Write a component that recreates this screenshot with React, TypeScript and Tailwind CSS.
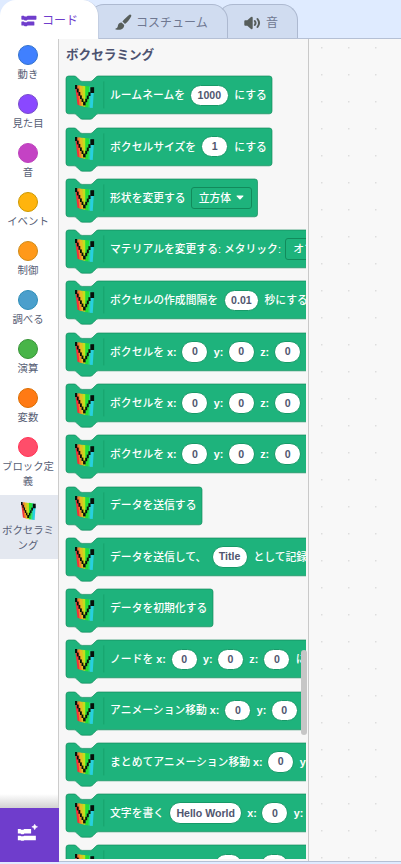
import React from "react";

type Piece = { kind: "text" | "input" | "menu"; value: string; w: string };
type BlockData = { width: number; pieces: Piece[] };

const t = (value: string, w: string): Piece => ({ kind: "text", value, w });
const i = (value: string, w: string): Piece => ({ kind: "input", value, w });
const m = (value: string, w: string): Piece => ({ kind: "menu", value, w });

const xyz: Piece[] = [
  t("ボクセルを x:", "w-[71.3px]"), i("0", "w-[27px]"),
  t("y:", "w-[19.4px] pl-[5.4px]"), i("0", "w-[27px]"),
  t("z:", "w-[19.4px] pl-[5.4px]"), i("0", "w-[27px]"),
];

const blocks: BlockData[] = [
  { width: 206, pieces: [t("ルームネームを", "w-[80px]"), i("1000", "w-[38.5px]"), t("にする", "pl-[5.7px]")] },
  { width: 206, pieces: [t("ボクセルサイズを", "w-[91px]"), i("1", "w-[27px]"), t("にする", "pl-[6.2px]")] },
  { width: 191.5, pieces: [t("形状を変更する", "w-[80.6px]"), m("立方体", "w-[61.5px]")] },
  { width: 300, pieces: [t("マテリアルを変更する: メタリック:", "w-[175.2px]"), m("オフ", "w-[51px]")] },
  { width: 300, pieces: [t("ボクセルの作成間隔を", "w-[113.6px]"), i("0.01", "w-[35.5px]"), t("秒にする", "pl-[5.4px]")] },
  { width: 350, pieces: xyz },
  { width: 350, pieces: xyz },
  { width: 350, pieces: xyz },
  { width: 136, pieces: [t("データを送信する", "")] },
  { width: 350, pieces: [t("データを送信して、", "w-[101.5px]"), i("Title", "w-[36px]"), t("として記録", "pl-[5.9px]")] },
  { width: 147, pieces: [t("データを初期化する", "")] },
  { width: 350, pieces: [t("ノードを x:", "w-[60.5px]"), i("0", "w-[27px]"), t("y:", "w-[19.4px] pl-[5.4px]"), i("0", "w-[27px]"), t("z:", "w-[19.4px] pl-[5.4px]"), i("0", "w-[27px]"), t("に", "pl-[5.4px]")] },
  { width: 350, pieces: [t("アニメーション移動 x:", "w-[114.3px]"), i("0", "w-[27px]"), t("y:", "w-[19.4px] pl-[5.4px]"), i("0", "w-[27px]")] },
  { width: 350, pieces: [t("まとめてアニメーション移動 x:", "w-[157.2px]"), i("0", "w-[27px]"), t("y:", "w-[19.4px] pl-[5.4px]")] },
  { width: 350, pieces: [t("文字を書く", "w-[59.4px]"), i("Hello World", "w-[72.5px]"), t("x:", "w-[19.4px] pl-[5.4px]"), i("0", "w-[27px]"), t("y:", "w-[19.4px] pl-[5.4px]")] },
  { width: 350, pieces: [t("", "w-[104.6px]"), i("", "w-[27px]"), t("", "w-[19.4px]"), i("", "w-[27px]")] },
];

const categories = [
  { name: "動き", color: "bg-[#4080ff] border-[#3373cc]" },
  { name: "見た目", color: "bg-[#8a48ff] border-[#774dcb]" },
  { name: "音", color: "bg-[#c442c4] border-[#bd42bd]" },
  { name: "イベント", color: "bg-[#ffb40d] border-[#cc9900]" },
  { name: "制御", color: "bg-[#ff991a] border-[#cf8b17]" },
  { name: "調べる", color: "bg-[#4a9fcc] border-[#2e8eb8]" },
  { name: "演算", color: "bg-[#48b548] border-[#389438]" },
  { name: "変数", color: "bg-[#ff7a14] border-[#db6e00]" },
  { name: "ブロック定義", color: "bg-[#ff4d6a] border-[#ff3355]" },
];

function VoxelIcon({ className }: { className: string }) {
  return (
    <svg className={className} viewBox="0 0 20 23" preserveAspectRatio="none">
      <path d="M.4 3 4 1 6 20.8 2.6 19.8Z" fill="#f5303a" />
      <path d="M2.4 .3 5.4 .6 7.5 21.2 4.6 20.5Z" fill="#f0802c" />
      <path d="M4.6 .5 8 .9 9.5 21.6 6.8 21Z" fill="#e3bd22" />
      <path d="M7.6 .8 11 1.2 11 22 8.8 21.6Z" fill="#c3df1c" />
      <path d="M10.6 1.1 15 1.6 14.2 22.4 10.6 21.9Z" fill="#25df36" />
      <path d="M14.6 1.5 17 1.7 16.4 22.7 13.8 22.4Z" fill="#2bd98c" />
      <path d="M16 5 19.4 5 18.2 23 15.4 22.7Z" fill="#28cfe0" />
      <g fill="#07100a">
        <rect x="0" y="0" width="2.2" height="4" />
        <rect x="1.9" y="3.6" width="1.9" height="3.8" />
        <rect x="3.5" y="7" width="1.9" height="3.8" />
        <rect x="5.1" y="10.4" width="1.9" height="3.6" />
        <rect x="6.7" y="13.6" width="1.9" height="3.4" />
        <rect x="8.3" y="16.6" width="2.6" height="3.8" />
        <rect x="10.5" y="13.8" width="2" height="3.4" />
        <rect x="12.1" y="10.6" width="2" height="3.6" />
        <rect x="13.7" y="7.2" width="2.2" height="3.8" />
        <rect x="15.7" y="2.2" width="3.9" height="5.8" />
      </g>
    </svg>
  );
}

function CodeIcon({ className }: { className: string }) {
  return (
    <svg className={className} viewBox="0 0 17 12" fill="currentColor">
      <path d="M1 .3h2l.9.8h2.2l.9-.8h8.8q.6 0 .6.6V4q0 .6-.6.6H7l-.9.9H3.9L3 4.6H1Q.4 4.6.4 4V.9Q.4.3 1 .3Z" />
      <path d="M1 6.6h2l.9.8h2.2l.9-.8h6.6q.6 0 .6.6v3q0 .6-.6.6H7l-.9.8H3.9l-.9-.8H1q-.6 0-.6-.6v-3q0-.6.6-.6Z" />
    </svg>
  );
}

function BlockShape({ width }: { width: number }) {
  const w = width / 0.675;
  const d = `M0 4A4 4 0 0 1 4 0H12c2 0 3 1 4 2l4 4c1 1 2 2 4 2h12c2 0 3-1 4-2l4-4c1-1 2-2 4-2H${w - 4}a4 4 0 0 1 4 4V52a4 4 0 0 1-4 4H48c-2 0-3 1-4 2l-4 4c-1 1-2 2-4 2H24c-2 0-3-1-4-2l-4-4c-1-1-2-2-4-2H4a4 4 0 0 1-4-4Z`;
  return (
    <svg className="absolute left-0 top-0 overflow-visible" width={width} height={43.2}>
      <g transform="scale(.675)">
        <path d={d} fill="#1eb37c" stroke="#128a5b" strokeWidth="1" />
        <path d="M56 8V48" stroke="#159965" strokeWidth="1" />
      </g>
    </svg>
  );
}

function Block({ width, pieces }: BlockData) {
  return (
    <div className="relative h-[51.28px] shrink-0">
      <BlockShape width={width} />
      <div className="relative flex h-[38px] items-center whitespace-nowrap pl-[9.4px] text-[10.8px] font-medium text-white">
        <VoxelIcon className="mt-[3px] h-[23px] w-[19.5px] shrink-0" />
        <div className="flex items-center pl-[15.2px]">
          {pieces.map((p, k) => {
            if (p.kind === "text")
              return (
                <span key={k} className={`shrink-0 ${p.w}`}>
                  {p.value.split(/([xyz]:)/).map((s, n) => (n % 2 ? <b key={n} className="font-bold">{s}</b> : s))}
                </span>
              );
            if (p.kind === "input")
              return (
                <span key={k} className={`flex h-[21.6px] shrink-0 items-center justify-center rounded-full border-[0.7px] border-[#179a68] bg-white pt-px text-[10.6px] font-bold text-[#50566f] ${p.w}`}>
                  {p.value}
                </span>
              );
            return (
              <span key={k} className={`flex h-[22.5px] shrink-0 items-center gap-[5px] rounded-[3px] border border-[#128a5b] pl-[7px] ${p.w}`}>
                {p.value}
                <svg className="h-[5px] w-[8px]" viewBox="0 0 8 5"><path d="M1 .5h6q.8 0 .3.7L4.6 4.3q-.6.6-1.2 0L.7 1.2Q.2.5 1 .5Z" fill="white" /></svg>
              </span>
            );
          })}
        </div>
      </div>
    </div>
  );
}

function Tabs() {
  return (
    <div className="flex h-[39px] shrink-0 items-end border-b border-[#b5c0d5] bg-[#dfebff] text-[12px] text-[#6f7891]">
      <div className="relative z-20 -mb-px flex h-[39px] w-[99px] items-center rounded-t-[16px] border-r border-[#c3cee2] bg-white pl-[21px] pt-[2px] text-[#6f3dcc]">
        <CodeIcon className="h-[12px] w-[16px]" />
        <span className="ml-[5px]">コード</span>
      </div>
      <div className="relative z-10 -ml-[11px] flex h-[34px] w-[140px] items-center rounded-t-[16px] border border-b-0 border-[#adb9d0] bg-[#d0dcf0] pl-[26px] pt-[2px]">
        <svg className="h-[17px] w-[17px]" viewBox="0 0 17 17" fill="#575e5b">
          <path d="M15.7.8c.8.4.7 1.2.3 2-1.4 2.7-3.6 5.5-6 7.3L7.4 7.6C9.5 5 12.6 2 14.4.8q.7-.4 1.3 0Z" />
          <path d="M6.5 8.5 9.2 11c0 3.8-3.3 5.7-8.4 4.4-.6-.2-.7-.7 0-.9 2-.5 1.7-1.6 2.2-3.3.5-1.8 2-2.8 3.5-2.7Z" />
        </svg>
        <span className="ml-[4px]">コスチューム</span>
      </div>
      <div className="-ml-[11px] flex h-[34px] w-[81px] items-center rounded-t-[16px] border border-b-0 border-[#adb9d0] bg-[#d0dcf0] pl-[26px] pt-[2px]">
        <svg className="h-[14px] w-[17px]" viewBox="0 0 17 14" fill="#575e5b">
          <path d="M1.2 4.3h2.1L7 1.1q1.7-1 1.7.8v10.2q0 1.8-1.7.8L3.3 9.8H1.2Q.3 9.8.3 8.8V5.3q0-1 .9-1Z" />
          <path d="M10.8 5q1.5 2 0 4M13.5 3q3.1 4 0 8" fill="none" stroke="#575e5b" strokeWidth="2" strokeLinecap="round" />
        </svg>
        <span className="ml-[5px]">音</span>
      </div>
    </div>
  );
}

function Sidebar() {
  return (
    <div className="flex w-[59px] shrink-0 flex-col bg-white text-center text-[10.4px] leading-[15px] text-[#575e75]">
      <div className="flex min-h-0 flex-1 flex-col border-r border-[#cccccc]">
        {categories.map((c) => (
          <div key={c.name} className="flex flex-col items-center pb-[6.5px] pr-[2px] pt-[6px]">
            <div className={`h-[20px] w-[20px] shrink-0 rounded-full border ${c.color}`} />
            <span className="mt-[1.5px]">{c.name}</span>
          </div>
        ))}
        <div className="flex h-[64px] flex-col items-center bg-[#e4e8f0] pl-px pr-[3px] pt-[7px]">
          <VoxelIcon className="h-[18px] w-[15px] shrink-0" />
          <span className="mt-[2.5px]">ボクセラミング</span>
        </div>
        <div className="mt-auto h-[14px] bg-gradient-to-b from-white to-[#d2d2d2]" />
      </div>
      <div className="flex h-[54px] shrink-0 items-center justify-center bg-[#6f3dcc]">
        <svg className="-ml-[4px] -mt-[4px] h-[18px] w-[21px]" viewBox="0 0 22 19" fill="white">
          <path d="M.8 5.3h2.7l.9.8h2.2l.9-.8h7.3V10H7.7l-.9.8H4.5l-.9-.8H.8Z" />
          <path d="M.8 12.3h2.7l.9.7h2.2l.9-.7h12.3v4.8H7.7l-.9.7H4.5l-.9-.7H.8Z" />
          <path d="M18.6.3 19.6 2.1 21.6 3 19.6 4 18.6 6 17.6 4 15.6 3 17.6 2.1Z" stroke="white" strokeWidth=".6" />
        </svg>
      </div>
    </div>
  );
}

export default function App() {
  return (
    <div className="flex h-[864px] w-[401px] flex-col overflow-hidden bg-[#dfebff] font-['Liberation_Sans','Noto_Sans_CJK_JP',sans-serif]">
      <Tabs />
      <div className="flex h-[823px] shrink-0">
        <Sidebar />
        <div className="flex min-w-0 flex-1 border-b border-[#b5c0d5] bg-[#f8f8f8]">
          <div className="relative flex w-[250px] shrink-0 border-r border-[#c9c9c9] bg-[#f7f7f7]">
            <div className="flex h-[820px] w-[247px] flex-col overflow-hidden pl-[7px]">
              <h2 className="h-[37.4px] shrink-0 pt-[7px] text-[12.6px] font-bold leading-[18px] text-[#4d5370]">ボクセラミング</h2>
              {blocks.map((b, k) => <Block key={k} {...b} />)}
            </div>
            <div className="absolute right-[1px] top-[611px] h-[85px] w-[6px] rounded-full bg-[#c6c6c6]" />
          </div>
          <svg className="h-full flex-1">
            <defs>
              <pattern id="dots" width="27" height="27" patternUnits="userSpaceOnUse">
                <rect x="12" y="8" width="1.5" height="1.5" fill="#dddddd" />
              </pattern>
            </defs>
            <rect width="100%" height="100%" fill="url(#dots)" />
          </svg>
        </div>
      </div>
    </div>
  );
}
